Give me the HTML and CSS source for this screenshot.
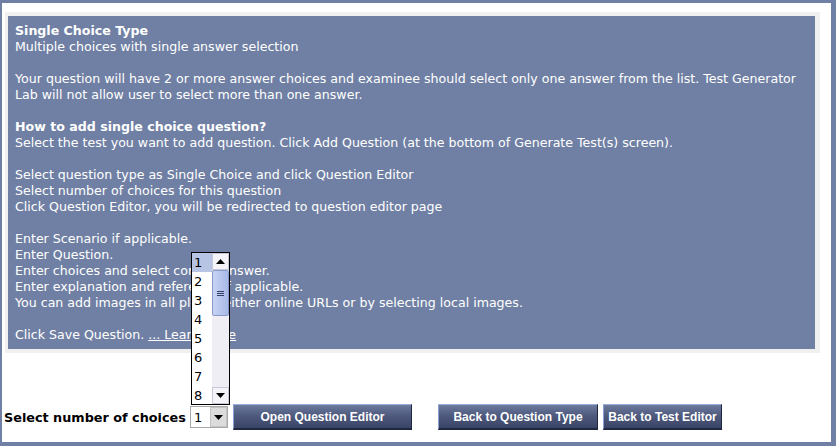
FILE: index.html
```html
<!DOCTYPE html>
<html>
<head>
<meta charset="utf-8">
<link rel="stylesheet" href="styles.css">
</head>
<body>
<div class="frame">
  <div class="info-wrap">
    <div class="info">
      <p><b>Single Choice Type</b><br>Multiple choices with single answer selection</p>
      <p>Your question will have 2 or more answer choices and examinee should select only one answer from the list. Test Generator Lab will not allow user to select more than one answer.</p>
      <p><b>How to add single choice question?</b><br>Select the test you want to add question. Click Add Question (at the bottom of Generate Test(s) screen).</p>
      <p>Select question type as Single Choice and click Question Editor<br>Select number of choices for this question<br>Click Question Editor, you will be redirected to question editor page</p>
      <p>Enter Scenario if applicable.<br>Enter Question.<br>Enter choices and select correct answer.<br>Enter explanation and reference if applicable.<br>You can add images in all places either online URLs or by selecting local images.</p>
      <p>Click Save Question. <a href="#" class="more">... Learn more</a></p>
    </div>
  </div>
  <div class="controls">
    <span class="label">Select number of choices</span>
    <div class="select">
      <span class="select-value">1</span>
      <span class="select-btn"><svg width="9" height="5" viewBox="0 0 9 5"><path d="M0 0h9L4.5 5z" fill="#000"/></svg></span>
      <div class="list">
        <ul class="items">
          <li class="on">1</li><li>2</li><li>3</li><li>4</li><li>5</li><li>6</li><li>7</li><li>8</li>
        </ul>
        <div class="scroll">
          <span class="sbtn"><svg width="9" height="5" viewBox="0 0 9 5"><path d="M0 5h9L4.5 0z" fill="#000"/></svg></span>
          <span class="thumb"><i></i><i></i><i></i></span>
          <span class="track"></span>
          <span class="sbtn"><svg width="9" height="5" viewBox="0 0 9 5"><path d="M0 0h9L4.5 5z" fill="#000"/></svg></span>
        </div>
      </div>
    </div>
    <button class="btn btn-open">Open Question Editor</button>
    <button class="btn btn-type">Back to Question Type</button>
    <button class="btn btn-test">Back to Test Editor</button>
  </div>
</div>
</body>
</html>
```
FILE: styles.css
```css
html, body {
  margin: 0;
  padding: 0;
  background: #fff;
}
.frame {
  box-sizing: border-box;
  width: 836px;
  height: 446px;
  border-style: solid;
  border-color: #7080a4;
  border-width: 3px 5px 4px 2px;
  background: #fff;
}
.info-wrap {
  margin: 9px 11px 0 3px;
  padding: 4px 5px 4px 3px;
  background: #f0f0f0;
}
.info {
  background: #7080a4;
  color: #fff;
  padding: 7px 6px 6px 7px;
  font-family: "DejaVu Sans", Verdana, sans-serif;
  font-size: 12.6px;
  line-height: 16px;
  height: 320px;
}
.info p {
  margin: 0 0 16px 0;
}
.info p:last-child {
  margin-bottom: 0;
}
.more {
  color: #fff;
  text-decoration: underline;
}
.controls {
  display: flex;
  align-items: center;
  margin-top: 51px;
  margin-left: 2px;
  height: 26px;
}
.label {
  font-family: "DejaVu Sans", Verdana, sans-serif;
  font-weight: bold;
  font-size: 12.8px;
  color: #000;
  width: 186px;
  white-space: nowrap;
}
.select {
  position: relative;
  box-sizing: border-box;
  width: 38px;
  height: 22px;
  border: 1px solid #a8a8a8;
  background: #fff;
  display: flex;
  align-items: center;
}
.select-value {
  flex: 1;
  padding-left: 3px;
  font-family: "DejaVu Sans", Tahoma, sans-serif;
  font-size: 13px;
}
.select-btn {
  box-sizing: border-box;
  width: 17px;
  height: 20px;
  background: #dcdcdc;
  border: 1px solid #c4c4c4;
  display: flex;
  align-items: center;
  justify-content: center;
}
.list {
  position: absolute;
  left: 0;
  bottom: 22px;
  box-sizing: border-box;
  width: 39px;
  height: 153px;
  border: 1px solid #000;
  background: #fff;
  display: flex;
}
.items {
  list-style: none;
  margin: 0;
  padding: 0;
  flex: 1;
}
.items li {
  height: 19px;
  line-height: 19px;
  padding-left: 2px;
  font-family: "DejaVu Sans", Tahoma, sans-serif;
  font-size: 13px;
  color: #000;
}
.items li.on {
  background: #b8c4e4;
}
.scroll {
  width: 17px;
  display: flex;
  flex-direction: column;
  background: #f0f0f4;
}
.sbtn {
  box-sizing: border-box;
  height: 17px;
  border: 1px solid #c8c8d8;
  background: #f4f4f8;
  display: flex;
  align-items: center;
  justify-content: center;
}
.thumb {
  box-sizing: border-box;
  height: 46px;
  border: 1px solid #8898c8;
  border-radius: 2px;
  background: linear-gradient(to right, #c8d4f4, #a8b8e8);
  display: flex;
  flex-direction: column;
  align-items: center;
  justify-content: center;
  gap: 1px;
}
.thumb i {
  display: block;
  width: 7px;
  height: 1px;
  background: #34406a;
}
.track {
  flex: 1;
  background: #eeeef4;
}
.btn {
  box-sizing: border-box;
  height: 26px;
  padding: 0;
  font-family: "Liberation Sans", Arial, sans-serif;
  font-weight: bold;
  font-size: 12px;
  color: #fff;
  border-style: solid;
  border-width: 1px 1px 2px 1px;
  border-color: #9aaee0 #1e2640 #1e2640 #8ca0d8;
  background: linear-gradient(to bottom, #6c7a9c 0%, #4e5a7e 45%, #3a4466 100%);
  cursor: pointer;
}
.btn-open {
  width: 179px;
  margin-left: 5px;
}
.btn-type {
  width: 160px;
  margin-left: 26px;
}
.btn-test {
  width: 119px;
  margin-left: 5px;
}
```
